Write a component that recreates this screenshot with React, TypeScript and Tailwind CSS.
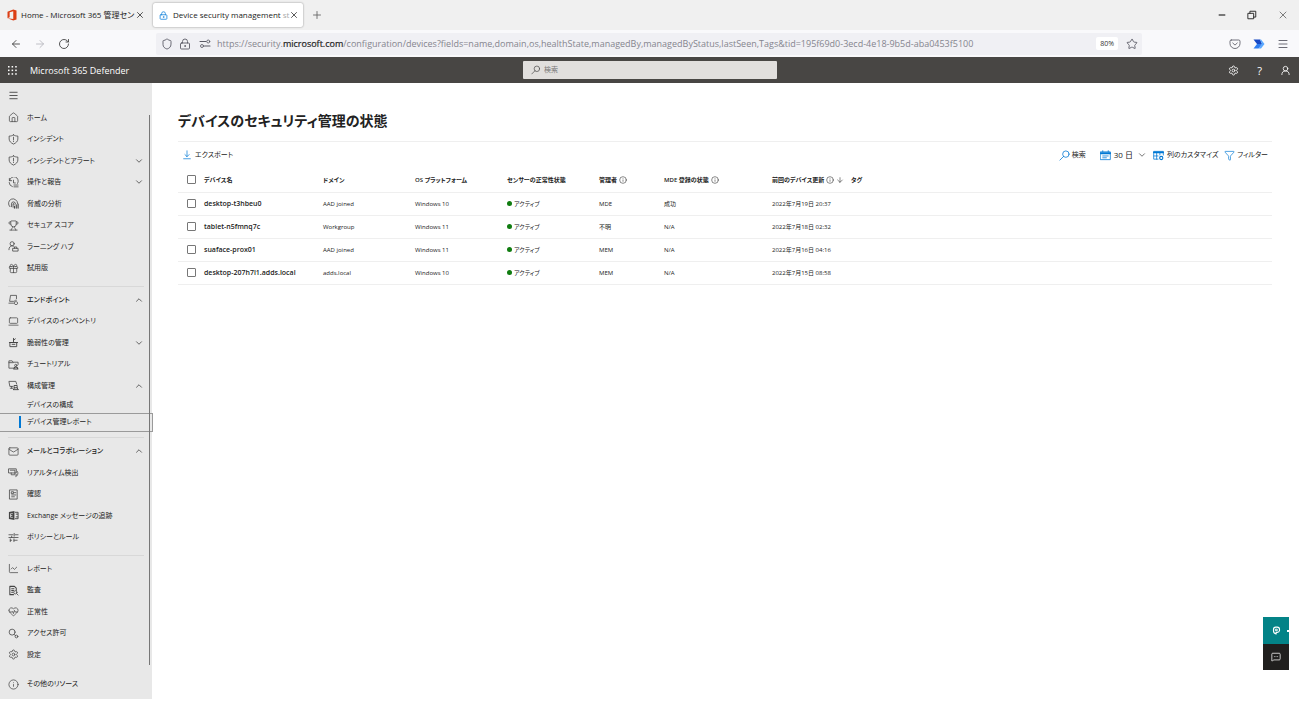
import React, { useState } from "react";
import {
  ArrowDown,
  ArrowLeft,
  ArrowRight,
  ChevronDown,
  ChevronUp,
  Filter,
  Gift,
  HeartPulse,
  House,
  Info,
  LaptopMinimal,
  LineChart,
  LockKeyhole,
  Mail,
  Menu,
  MessageSquareMore,
  Minus,
  Plus,
  RotateCw,
  Settings,
  Shield,
  Star,
  Trophy,
  UserRound,
  X,
} from "lucide-react";

type IconProps = { className?: string; strokeWidth?: number };
type IconType = React.ComponentType<IconProps>;

function Glyph({ className, children }: { className?: string; children: React.ReactNode }) {
  return (
    <svg
      viewBox="0 0 24 24"
      className={className}
      fill="none"
      stroke="currentColor"
      strokeWidth={1.7}
      strokeLinecap="round"
      strokeLinejoin="round"
      aria-hidden="true"
    >
      {children}
    </svg>
  );
}

const OfficeLogo = ({ className }: IconProps) => (
  <svg viewBox="0 0 24 24" className={className} aria-hidden="true">
    <path d="M3 5.5 14.5 1 21 3v18l-6.5 2L3 18.7l11.5 1.4V4.6L7.3 6.3v10.4L3 18.7Z" fill="#dc3e15" />
  </svg>
);

const FlowLogo = ({ className }: IconProps) => (
  <svg viewBox="0 0 24 24" className={className} aria-hidden="true">
    <path d="M1 3h13l4 9H8Z" fill="#1648c4" />
    <path d="M14 3h2l7 9-7 9h-5l7-9Z" fill="#5aa9ff" />
    <path d="M8 12h10l-7 9H1Z" fill="#2f7df0" />
  </svg>
);

const Pocket = ({ className }: IconProps) => (
  <Glyph className={className}>
    <path d="M4.5 4h15A2.5 2.5 0 0 1 22 6.5V11a10 10 0 0 1-20 0V6.5A2.5 2.5 0 0 1 4.5 4Z" />
    <path d="m7.5 10 4.5 4.2 4.5-4.2" />
  </Glyph>
);

const Permissions = ({ className }: IconProps) => (
  <Glyph className={className}>
    <path d="M2 7h12M11 16h11" strokeWidth={2.2} />
    <circle cx="18.5" cy="7" r="3" />
    <circle cx="6" cy="16" r="3" />
  </Glyph>
);

const Waffle = ({ className }: IconProps) => (
  <svg viewBox="0 0 10 10" className={className} fill="currentColor" aria-hidden="true">
    {[0, 4, 8].map((y) => [0, 4, 8].map((x) => <rect key={`${x}-${y}`} x={x} y={y} width="1.7" height="1.7" />))}
  </svg>
);

const Lens = ({ className }: IconProps) => (
  <Glyph className={className}>
    <circle cx="15" cy="9" r="7" />
    <path d="M10 14 2 22" />
  </Glyph>
);

const WideShield = ({ className }: IconProps) => (
  <Glyph className={className}>
    <path d="M12 2c3 2 6 2.500 9.500 2.500V11c0 5-4 8.500-9.500 11C6.500 19.500 2.500 16 2.500 11V4.500C6 4.500 9 4 12 2Z" />
    <path d="M12 7v6M12 16v.5" />
  </Glyph>
);

const ActionHistory = ({ className }: IconProps) => (
  <Glyph className={className}>
    <path d="M3 3v5h5M3.500 8A9.500 9.500 0 1 1 21 14M2.500 12a9.500 9.500 0 0 0 7 9" />
    <path d="M12 7v6h4M13 17.500h9M13 21.500h9" />
  </Glyph>
);

const Threat = ({ className }: IconProps) => (
  <Glyph className={className}>
    <path d="M4 19a10 10 0 1 1 17-7M7.5 19v-6a4.5 4.5 0 0 1 9 0M11 20v-7a1 1 0 0 1 2 0v2" />
    <path d="M14 22v-4M18 22v-7M22 22v-9" strokeWidth={2.4} />
  </Glyph>
);

const Learning = ({ className }: IconProps) => (
  <Glyph className={className}>
    <circle cx="9" cy="6" r="4.5" />
    <path d="M2 19c0-5 3-8.5 7-8.5 2 0 3.500.8 4.500 2" />
    <path d="M11 16h11v6H11zM14 16v-3h5v3" />
  </Glyph>
);

const Endpoint = ({ className }: IconProps) => (
  <Glyph className={className}>
    <path d="M12 16H3.5l2-13h13v7M2 20h10" />
    <path d="M15 14.5v3a3.500 3.500 0 1 0 5 0M17.500 13v4" />
  </Glyph>
);

const Vulnerability = ({ className }: IconProps) => (
  <Glyph className={className}>
    <path d="M5 12h14v9H5zM3 12h18M12 12V3M12 7l4-3M9 16h6" strokeWidth={2} />
  </Glyph>
);

const Tutorial = ({ className }: IconProps) => (
  <Glyph className={className}>
    <path d="M11 20H2V4h7l2 3h11v5M2 8h9" />
    <circle cx="17" cy="14" r="2.500" />
    <path d="M12.500 22c0-3 2-4.500 4.500-4.500s4.500 1.500 4.500 4.500Z" strokeWidth={2.200} />
  </Glyph>
);

const ConfigManagement = ({ className }: IconProps) => (
  <Glyph className={className}>
    <path d="M10 14H4L2 3h15l2 6M5 18h5M8 14v4" />
    <path d="M14 12h6v5h-6zM12 21h10M14 17l-2 4M20 17l2 4" strokeWidth={2} />
  </Glyph>
);

const RealTime = ({ className }: IconProps) => (
  <Glyph className={className}>
    <path d="M2 4h16v9H2zM5 7h10v9M7 13v4h7" />
    <path d="M20 9c3 3 2 9-3 12l1-5" />
  </Glyph>
);

const Review = ({ className }: IconProps) => (
  <Glyph className={className}>
    <path d="M4 2h16v20H4zM8 6h4v4H8zM14 8h3M8 13h9M8 17h6" />
  </Glyph>
);

const ExchangeLogo = ({ className }: IconProps) => (
  <svg viewBox="0 0 24 24" className={className} aria-hidden="true">
    <path d="M2 4.5 14 2v20L2 19.5Z" fill="currentColor" />
    <path d="M5.500 8h5M5.500 12h4M5.500 16h5M5.500 8v8" stroke="#e8e8e8" strokeWidth="1.600" />
    <path d="M15 5h7v4h-5M15 19h7v-4h-5M22 9v6" stroke="currentColor" strokeWidth="2" fill="none" />
  </svg>
);

const Policies = ({ className }: IconProps) => (
  <Glyph className={className}>
    <path d="M2 6h9M16 6h6M13.500 3v6M2 12h20M5 18h3M13 18h7M5 15v6M13 15v6M8 9v3" />
  </Glyph>
);

const Audit = ({ className }: IconProps) => (
  <Glyph className={className}>
    <path d="M12 21H4V3h10l4 4v5M8 8h5M8 12h4M8 16h3" strokeWidth={2.200} />
    <circle cx="16" cy="16" r="3.500" />
    <path d="m19 19 3 3" />
  </Glyph>
);

const Access = ({ className }: IconProps) => (
  <Glyph className={className}>
    <circle cx="9" cy="9" r="6.500" />
    <path d="m13.500 14 3 3" />
    <circle cx="18.500" cy="18.500" r="3" />
  </Glyph>
);

const Calendar = ({ className }: IconProps) => (
  <Glyph className={className}>
    <path d="M1.500 4h21v17h-21zM6 1.500V4M18 1.500V4" />
    <path d="M2 7h20" strokeWidth={4} />
    <path d="M6 13h12M6 17h8" />
  </Glyph>
);

const Columns = ({ className }: IconProps) => (
  <Glyph className={className}>
    <path d="M11 20H1.500V3h21v8M8 7v13M15 7v4M2 13h9" />
    <path d="M2 5h20" strokeWidth={4} />
    <circle cx="18" cy="17.500" r="3.500" strokeWidth={2.400} />
  </Glyph>
);

const Headset = ({ className }: IconProps) => (
  <Glyph className={className}>
    <path d="M4 13V9a6 6 0 0 1 6-6h4a6 6 0 0 1 6 6v3a6 6 0 0 1-6 5h-3v4c-4-1-7-4-7-8Z" strokeWidth={3} />
    <path d="M10 8.500h4v4h-4z" strokeWidth={2.400} />
  </Glyph>
);

type Entry = {
  label: string;
  icon?: IconType;
  chevron?: "up" | "down";
  bold?: boolean;
  sub?: boolean;
  selected?: boolean;
};

const groups: Entry[][] = [
  [
    { label: "ホーム", icon: House },
    { label: "インシデント", icon: WideShield },
    { label: "インシデントとアラート", icon: WideShield, chevron: "down" },
    { label: "操作と報告", icon: ActionHistory, chevron: "down" },
    { label: "脅威の分析", icon: Threat },
    { label: "セキュア スコア", icon: Trophy },
    { label: "ラーニング ハブ", icon: Learning },
    { label: "試用版", icon: Gift },
  ],
  [
    { label: "エンドポイント", icon: Endpoint, chevron: "up", bold: true },
    { label: "デバイスのインベントリ", icon: LaptopMinimal },
    { label: "脆弱性の管理", icon: Vulnerability, chevron: "down" },
    { label: "チュートリアル", icon: Tutorial },
    { label: "構成管理", icon: ConfigManagement, chevron: "up" },
    { label: "デバイスの構成", sub: true },
    { label: "デバイス管理レポート", sub: true, selected: true },
  ],
  [
    { label: "メールとコラボレーション", icon: Mail, chevron: "up", bold: true },
    { label: "リアルタイム検出", icon: RealTime },
    { label: "確認", icon: Review },
    { label: "Exchange メッセージの追跡", icon: ExchangeLogo },
    { label: "ポリシーとルール", icon: Policies },
  ],
  [
    { label: "レポート", icon: LineChart },
    { label: "監査", icon: Audit },
    { label: "正常性", icon: HeartPulse },
    { label: "アクセス許可", icon: Access },
    { label: "設定", icon: Settings },
  ],
];

function NavRow({ entry }: { entry: Entry }) {
  const Icon = entry.icon;
  if (entry.sub) {
    return (
      <li className="h-[17px] shrink-0">
        <a
          href="#"
          aria-current={entry.selected ? "page" : undefined}
          className={
            entry.selected
              ? "flex h-full items-center pl-[19px] outline outline-[#9a9a9a]"
              : "flex h-full items-center pl-[19px]"
          }
        >
          <span className={entry.selected ? "h-3 w-0.5 bg-[#0078d4]" : "h-3 w-0.5"} />
          <span className="pl-1.5">{entry.label}</span>
        </a>
      </li>
    );
  }
  return (
    <li className="min-h-5 flex-1">
      <a href="#" className="flex h-full items-center pl-2 pr-2">
        {Icon && <Icon className="size-[11px] shrink-0 text-[#444]" strokeWidth={1.6} />}
        <span className={entry.bold ? "flex-1 pl-2 font-medium" : "flex-1 pl-2"}>{entry.label}</span>
        {entry.chevron === "down" && <ChevronDown className="size-2.5" strokeWidth={1.6} />}
        {entry.chevron === "up" && <ChevronUp className="size-2.5" strokeWidth={1.6} />}
      </a>
    </li>
  );
}

function Divider() {
  return (
    <li aria-hidden="true" className="flex h-2.5 shrink-0 items-center pl-2 pr-2 pt-1">
      <span className="h-px flex-1 bg-[#d8d8d8]" />
    </li>
  );
}

const devices = [
  { name: "desktop-t3hbeu0", domain: "AAD joined", os: "Windows 10", by: "MDE", enroll: "成功", seen: "2022年7月19日 20:37" },
  { name: "tablet-n5fmnq7c", domain: "Workgroup", os: "Windows 11", by: "不明", enroll: "N/A", seen: "2022年7月18日 02:32" },
  { name: "suaface-prox01", domain: "AAD joined", os: "Windows 11", by: "MEM", enroll: "N/A", seen: "2022年7月16日 04:16" },
  { name: "desktop-207h7l1.adds.local", domain: "adds.local", os: "Windows 10", by: "MEM", enroll: "N/A", seen: "2022年7月15日 08:58" },
];

const boxClass =
  "ml-[9px] block size-[9px] appearance-none rounded-[1px] border border-[#777] bg-white checked:bg-[#0078d4]";

function BrowserChrome() {
  return (
    <div>
      <div className="flex h-[30px] items-center bg-[#f0f0f0] text-[8px] text-[#222]">
        <div className="flex w-[153px] items-center pl-1.5">
          <OfficeLogo className="size-3 shrink-0" />
          <span className="ml-[3px] flex-1 whitespace-nowrap">Home - Microsoft 365 管理セン</span>
          <button type="button" aria-label="Home タブを閉じる" className="pr-2">
            <X className="size-2.5" strokeWidth={1.8} />
          </button>
        </div>
        <div className="flex h-6 w-[150px] items-center rounded-xs bg-white pl-1.5 shadow-[0_0_2px_rgba(0,0,0,0.45)]">
          <LockKeyhole className="size-[9px] shrink-0 text-[#1c87dc]" strokeWidth={2.2} />
          <span className="ml-[5px] flex-1 whitespace-nowrap">
            Device security management <span className="text-[#aaa]">st</span>
          </span>
          <button type="button" aria-label="Device タブを閉じる" className="pr-1.5">
            <X className="size-2.5" strokeWidth={1.8} />
          </button>
        </div>
        <button type="button" aria-label="新しいタブ" className="ml-2">
          <Plus className="size-3 text-[#666]" strokeWidth={1.8} />
        </button>
        <div className="ml-auto flex items-center gap-5 pr-2.5">
          <button type="button" aria-label="最小化">
            <Minus className="size-2.5 text-black" strokeWidth={2.4} />
          </button>
          <button type="button" aria-label="元に戻す">
            <Glyph className="size-2.5">
              <path d="M3 8h13v13H3zM7 8V3h14v14h-5" strokeWidth={2.2} />
            </Glyph>
          </button>
          <button type="button" aria-label="閉じる">
            <X className="size-3 text-[#555]" strokeWidth={1.5} />
          </button>
        </div>
      </div>
      <div className="flex h-[27px] items-center bg-[#f9f9fb] pr-2.5 text-[#5b5b66]">
        <div className="flex w-[156px] items-center gap-3 pl-2.5">
          <button type="button" aria-label="戻る">
            <ArrowLeft className="size-3 text-[#444]" strokeWidth={1.8} />
          </button>
          <button type="button" aria-label="進む">
            <ArrowRight className="size-3 text-[#b9b9bf]" strokeWidth={1.8} />
          </button>
          <button type="button" aria-label="再読み込み">
            <RotateCw className="size-3 text-[#444]" strokeWidth={1.8} />
          </button>
        </div>
        <div className="flex h-[22px] w-[986px] items-center rounded-xs bg-[#f0f0f4] pl-[5px] pr-1 text-[9px]">
          <Shield className="size-3" strokeWidth={1.8} />
          <LockKeyhole className="ml-1.5 size-3" strokeWidth={1.8} />
          <Permissions className="ml-2 size-3" />
          <span className="ml-1.5 flex-1 whitespace-nowrap text-[#85858e]">
            https://security.<span className="text-[#222] [-webkit-text-stroke:0.2px]">microsoft.com</span>
            /configuration/devices?fields=name,domain,os,healthState,managedBy,managedByStatus,lastSeen,Tags&amp;tid=195f69d0-3ecd-4e18-9b5d-aba0453f5100
          </span>
          <span className="rounded-xs bg-white px-1 text-[7px] leading-[13px] text-[#333]">80%</span>
          <Star className="ml-2 size-3" strokeWidth={1.8} />
        </div>
        <div className="ml-auto flex items-center gap-3">
          <Pocket className="size-3" />
          <FlowLogo className="size-3" />
          <Menu className="size-3" strokeWidth={1.8} />
        </div>
      </div>
    </div>
  );
}

function SuiteHeader() {
  return (
    <header className="flex h-[26px] items-center bg-[#484644] text-white">
      <div className="flex flex-1 items-center pl-2">
        <Waffle className="size-[9px]" />
        <span className="pl-[13px] pt-0.5 text-[9px] font-medium">Microsoft 365 Defender</span>
      </div>
      <label className="flex h-[18px] w-[254px] items-center rounded-[1px] bg-[#e1dfdd] pl-2 text-[#444]">
        <Lens className="size-2.5" />
        <input
          type="text"
          aria-label="検索"
          placeholder="検索"
          className="ml-1 w-full bg-transparent text-[7px] outline-none placeholder:text-[#777]"
        />
      </label>
      <div className="flex flex-1 items-center justify-end gap-4 pr-2">
        <Settings className="size-[11px]" strokeWidth={1.8} />
        <span className="px-0.5 text-[11px] leading-none">?</span>
        <UserRound className="size-[11px]" strokeWidth={1.8} />
      </div>
    </header>
  );
}

export default function App() {
  const [days] = useState(30);
  return (
    <div className="flex min-h-screen flex-col bg-white pb-[3px] pr-0.5 font-['Open_Sans','Noto_Sans_CJK_JP',sans-serif] text-[#222] [font-feature-settings:'palt']">
      <BrowserChrome />
      <SuiteHeader />
      <div className="flex flex-1">
        <nav aria-label="メイン" className="relative flex w-[152px] shrink-0 flex-col bg-[#e8e8e8] pb-1 text-[7px] leading-3 text-[#222]">
          <button type="button" aria-label="メニュー" className="flex h-6 items-center pl-2">
            <Menu className="size-[11px]" strokeWidth={1.6} />
          </button>
          <ul className="flex flex-1 flex-col">
            {groups.map((group, i) => (
              <React.Fragment key={i}>
                {i > 0 && <Divider />}
                {group.map((entry) => (
                  <NavRow key={entry.label} entry={entry} />
                ))}
              </React.Fragment>
            ))}
            <li aria-hidden="true" className="h-2 shrink-0" />
            <NavRow entry={{ label: "その他のリソース", icon: Info }} />
          </ul>
          <span className="absolute bottom-[34px] right-0.5 top-8 w-px bg-[#777]" />
        </nav>

        <main className="min-w-0 flex-1 pl-[26px] pr-[27px] pt-7">
          <h1 className="text-[14px] font-semibold leading-5">デバイスのセキュリティ管理の状態</h1>
          <div className="mt-2.5 flex h-[27px] items-center border-t border-[#efefef] pl-1 pr-1 text-[7px] leading-3">
            <button type="button" className="flex items-center gap-[3px]">
              <Glyph className="size-2.5 text-[#0078d4]">
                <path d="M12 2v14M7 11l5 5 5-5M4 21h16" />
              </Glyph>
              エクスポート
            </button>
            <div className="ml-auto flex items-center">
              <button type="button" className="flex items-center gap-0.5">
                <Lens className="size-[11px] text-[#0078d4]" />
                検索
              </button>
              <button type="button" className="ml-3.5 flex items-center">
                <Calendar className="size-[11px] text-[#0078d4]" />
                <span className="ml-[3px] text-[8px]">{days} 日</span>
                <ChevronDown className="ml-1 size-2.5" strokeWidth={1.5} />
              </button>
              <button type="button" className="ml-1.5 flex items-center gap-[3px]">
                <Columns className="size-[11px] text-[#0078d4]" />
                列のカスタマイズ
              </button>
              <button type="button" className="ml-1.5 flex items-center gap-0.5">
                <Filter className="size-[11px] text-[#0078d4]" strokeWidth={1.5} />
                フィルター
              </button>
            </div>
          </div>
          <table className="w-full table-fixed border-collapse text-left text-[6px] leading-3">
            <colgroup>
              <col className="w-[26px]" />
              <col className="w-[119px]" />
              <col className="w-[92px]" />
              <col className="w-[92px]" />
              <col className="w-[92px]" />
              <col className="w-[65px]" />
              <col className="w-[108px]" />
              <col className="w-[79px]" />
              <col />
            </colgroup>
            <thead>
              <tr className="h-6 border-b border-[#efefef] [&>th]:whitespace-nowrap [&>th]:p-0 [&>th]:font-semibold">
                <th>
                  <input type="checkbox" aria-label="すべて選択" className={boxClass} />
                </th>
                <th>デバイス名</th>
                <th>ドメイン</th>
                <th>OS プラットフォーム</th>
                <th>センサーの正常性状態</th>
                <th>
                  <span className="flex items-center gap-0.5">
                    管理者
                    <Info className="size-2" strokeWidth={1.6} />
                  </span>
                </th>
                <th>
                  <span className="flex items-center gap-0.5">
                    MDE 登録の状態
                    <Info className="size-2" strokeWidth={1.6} />
                  </span>
                </th>
                <th>
                  <span className="flex items-center gap-0.5">
                    前回のデバイス更新
                    <Info className="size-2" strokeWidth={1.6} />
                    <ArrowDown className="size-2" strokeWidth={1.6} />
                  </span>
                </th>
                <th>タグ</th>
              </tr>
            </thead>
            <tbody>
              {devices.map((d) => (
                <tr key={d.name} className="h-[23px] border-b border-[#efefef] [&>td]:whitespace-nowrap [&>td]:p-0">
                  <td>
                    <input type="checkbox" aria-label={d.name} className={boxClass} />
                  </td>
                  <td className="text-[7px] font-semibold">{d.name}</td>
                  <td>{d.domain}</td>
                  <td>{d.os}</td>
                  <td>
                    <span className="flex items-center gap-0.5">
                      <span className="size-[5px] rounded-full bg-[#107c10]" />
                      アクティブ
                    </span>
                  </td>
                  <td>{d.by}</td>
                  <td>{d.enroll}</td>
                  <td>{d.seen}</td>
                  <td />
                </tr>
              ))}
            </tbody>
          </table>
        </main>
      </div>
      <div className="fixed bottom-8 right-3 flex w-[26px] flex-col text-white">
        <button type="button" aria-label="ヘルプ" className="relative flex h-[27px] items-center justify-center bg-[#038387]">
          <Headset className="size-[9px]" />
          <span className="absolute right-0 h-0.5 w-0.5 bg-white" />
        </button>
        <button type="button" aria-label="フィードバック" className="flex h-[26px] items-center justify-center bg-[#201f1e]">
          <MessageSquareMore className="size-2.5" strokeWidth={1.8} />
        </button>
      </div>
    </div>
  );
}
